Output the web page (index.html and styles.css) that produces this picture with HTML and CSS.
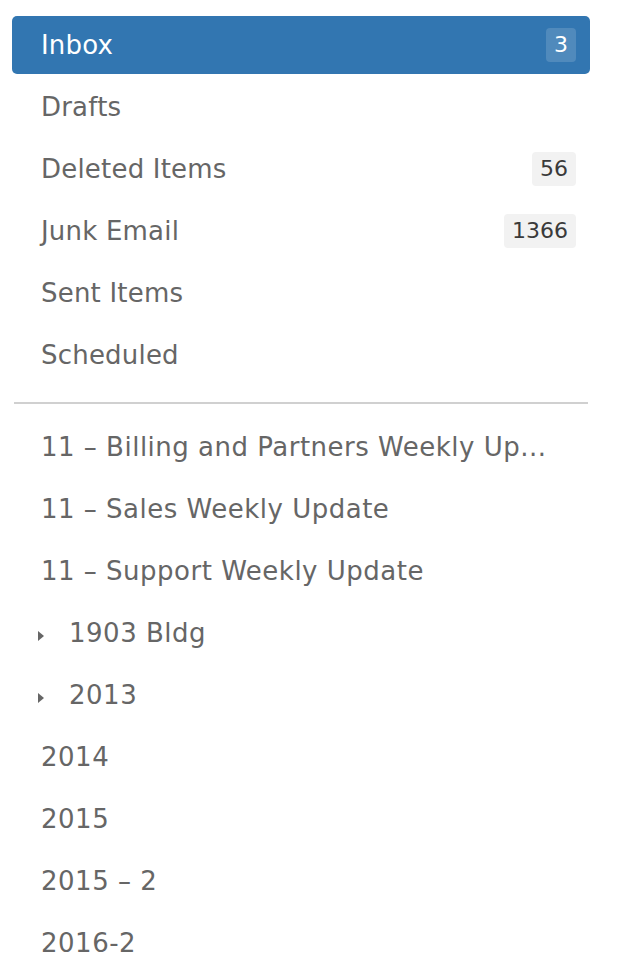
FILE: index.html
```html
<!DOCTYPE html>
<html>
<head>
<meta charset="utf-8">
<link rel="stylesheet" href="styles.css">
</head>
<body>
<nav class="folders">
  <ul class="list">
    <li class="row active"><span class="name">Inbox</span><span class="badge">3</span></li>
    <li class="row"><span class="name">Drafts</span></li>
    <li class="row"><span class="name">Deleted Items</span><span class="badge">56</span></li>
    <li class="row"><span class="name">Junk Email</span><span class="badge">1366</span></li>
    <li class="row"><span class="name">Sent Items</span></li>
    <li class="row"><span class="name">Scheduled</span></li>
  </ul>
  <hr class="divider">
  <ul class="list custom">
    <li class="row"><span class="name">11 – Billing and Partners Weekly Up...</span></li>
    <li class="row"><span class="name">11 – Sales Weekly Update</span></li>
    <li class="row"><span class="name">11 – Support Weekly Update</span></li>
    <li class="row"><span class="caret"></span><span class="name">1903 Bldg</span></li>
    <li class="row"><span class="caret"></span><span class="name">2013</span></li>
    <li class="row"><span class="name">2014</span></li>
    <li class="row"><span class="name">2015</span></li>
    <li class="row"><span class="name">2015 – 2</span></li>
    <li class="row"><span class="name">2016-2</span></li>
  </ul>
</nav>
</body>
</html>
```
FILE: styles.css
```css
html, body {
  margin: 0;
  padding: 0;
  background: #fff;
}
body {
  font-family: "DejaVu Sans", "Liberation Sans", sans-serif;
  color: #666;
  overflow: hidden;
}
.folders {
  padding: 16px 28px 0 12px;
}
.list {
  list-style: none;
  margin: 0;
  padding: 0;
  display: flex;
  flex-direction: column;
  gap: 4px;
}
.row {
  height: 58px;
  display: flex;
  align-items: center;
  padding: 0 14px 0 29px;
  border-radius: 5px;
  font-size: 26px;
  letter-spacing: 0.2px;
  white-space: nowrap;
}
.custom .row {
  letter-spacing: 0.5px;
}
.name {
  flex: 1;
}
.active {
  background: #3276b1;
  color: #fff;
}
.badge {
  font-size: 22px;
  letter-spacing: 0;
  height: 34px;
  line-height: 34px;
  padding: 0 8px;
  border-radius: 4px;
  background: #f2f2f2;
  color: #3a3a3a;
}
.active .badge {
  background: rgba(255, 255, 255, 0.15);
  color: #fff;
}
.divider {
  border: 0;
  border-top: 2px solid #d0d0d0;
  margin: 18px 2px 14px 2px;
  height: 0;
}
.caret {
  width: 0;
  height: 0;
  border-top: 5px solid transparent;
  border-bottom: 5px solid transparent;
  border-left: 6px solid #666;
  margin-left: -3px;
  margin-right: 25px;
  margin-top: 6px;
}
```
